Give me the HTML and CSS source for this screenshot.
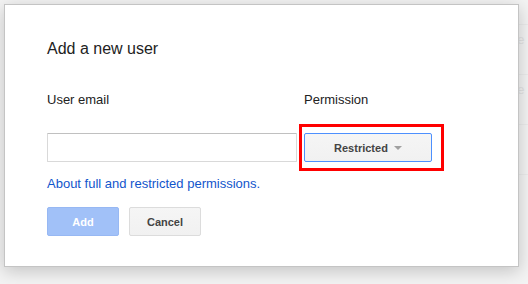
FILE: index.html
```html
<!DOCTYPE html>
<html lang="en">
<head>
    <meta charset="utf-8">
    <meta name="viewport" content="width=device-width, initial-scale=1">
    <title>Add a new user</title>
    <link rel="stylesheet" href="styles.css">
</head>
<body>
<div class="page">
    <div class="page-row first"></div>
    <div class="page-row"><span class="page-text">ne</span></div>
    <div class="page-row"><span class="page-text">ne</span></div>
    <div class="page-row"></div>
</div>

<div class="dialog">
    <div class="dialog-title">Add a new user</div>
    <div class="fields">
        <div class="field email-field">
            <label class="field-label" for="email">User email</label>
            <input type="text" id="email" class="email-input">
        </div>
        <div class="field">
            <div class="field-label">Permission</div>
            <button class="menu-btn">Restricted <span class="menu-arrow"></span></button>
        </div>
    </div>
    <a class="help-link" href="#">About full and restricted permissions.</a>
    <div class="actions">
        <button class="btn btn-add" disabled>Add</button>
        <button class="btn btn-cancel">Cancel</button>
    </div>
</div>

<div class="highlight"></div>
</body>
</html>
```

FILE: styles.css
```css
body {
    margin: 0;
    font-family: Arial, "Liberation Sans", sans-serif;
    background-color: #f3f3f3;
    width: 528px;
    height: 284px;
    overflow: hidden;
}
.page {
    padding-left: 440px;
}
.page-row {
    height: 49px;
    border-bottom: 1px solid #ebebeb;
    color: #e2e2e2;
    font-size: 13px;
    padding-left: 70px;
    line-height: 30px;
}
.page-row.first {
    height: 24px;
}
.page-text {
    display: inline-block;
}
.dialog {
    position: absolute;
    left: 4px;
    top: 4px;
    width: 429px;
    height: 227px;
    padding: 34px 42px 0 42px;
    background-color: #fff;
    border: 1px solid #c4c4c4;
    box-shadow: 0 4px 16px rgba(0, 0, 0, 0.2);
}
.dialog-title {
    font-size: 16px;
    line-height: 20px;
    color: #222;
}
.fields {
    display: flex;
    gap: 7px;
    margin-top: 33px;
}
.field {
    display: flex;
    flex-direction: column;
}
.field-label {
    font-size: 13px;
    line-height: 16px;
    color: #222;
    margin-bottom: 25px;
}
.email-input {
    box-sizing: border-box;
    width: 250px;
    height: 29px;
    margin: 0;
    border: 1px solid #d9d9d9;
    border-top-color: #c0c0c0;
    border-radius: 1px;
    padding: 0 8px;
    font-size: 13px;
}
.menu-btn {
    box-sizing: border-box;
    width: 128px;
    height: 29px;
    margin: 0;
    padding: 0;
    background-color: #f1f1f1;
    background-image: linear-gradient(#f5f5f5, #f1f1f1);
    border: 1px solid #4d90fe;
    border-radius: 2px;
    font-family: Arial, "Liberation Sans", sans-serif;
    font-size: 11px;
    font-weight: bold;
    color: #444;
    cursor: pointer;
}
.menu-arrow {
    display: inline-block;
    width: 0;
    height: 0;
    margin-left: 3px;
    vertical-align: 2px;
    border-left: 4px solid transparent;
    border-right: 4px solid transparent;
    border-top: 4px solid #a0a0a0;
}
.help-link {
    display: block;
    margin-top: 14px;
    font-size: 13px;
    line-height: 16px;
    color: #15c;
    text-decoration: none;
}
.actions {
    display: flex;
    gap: 10px;
    margin-top: 15px;
}
.btn {
    box-sizing: border-box;
    width: 72px;
    height: 29px;
    margin: 0;
    padding: 0;
    border-radius: 2px;
    font-family: Arial, "Liberation Sans", sans-serif;
    font-size: 11px;
    font-weight: bold;
    cursor: pointer;
}
.btn-add {
    background-color: #a1c1f8;
    border: 1px solid #97b8f3;
    color: #fff;
}
.btn-cancel {
    background-color: #f1f1f1;
    background-image: linear-gradient(#f5f5f5, #f1f1f1);
    border: 1px solid #dcdcdc;
    color: #444;
}
.highlight {
    position: absolute;
    left: 299px;
    top: 124px;
    width: 139px;
    height: 41px;
    border: 3px solid #f00;
}
```
